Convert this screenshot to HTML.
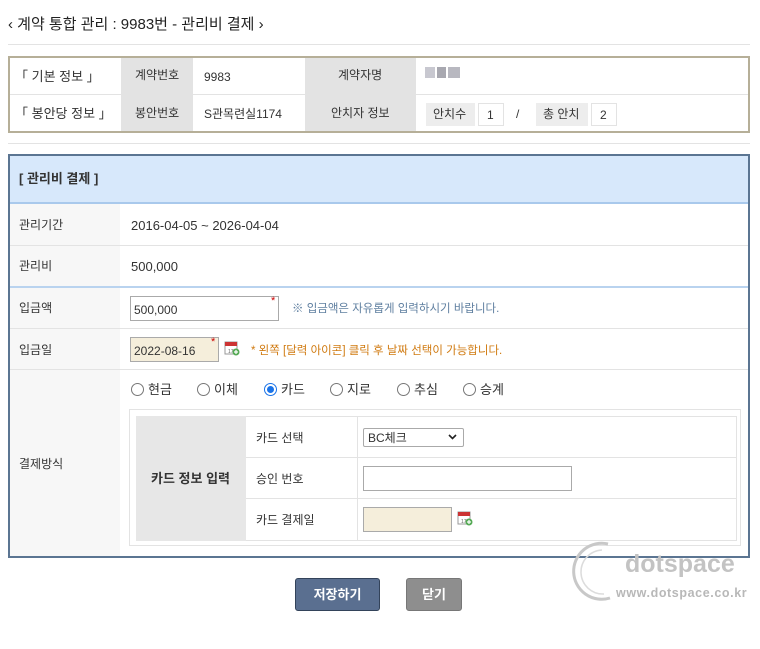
<!DOCTYPE html>
<html><head><meta charset="utf-8">
<style>
*{margin:0;padding:0;box-sizing:border-box}
body{width:760px;height:649px;background:#fff;font-family:"Liberation Sans","Noto Sans CJK KR","NanumGothic",sans-serif;font-size:12px;color:#333;position:relative;overflow:hidden}
.a{position:absolute}
.t{line-height:1;white-space:nowrap}
.cal{position:absolute;width:16px;height:16px}
.radio{position:absolute;top:383px;width:13px;height:13px;border:1px solid #777;border-radius:50%;background:#fff}
.rl{position:absolute;top:383px;font-size:13px;line-height:14px;color:#333}
</style></head><body>
<div class="a t" style="left:8px;top:17px;font-size:15px;color:#222">‹ 계약 통합 관리 : 9983번 - 관리비 결제 ›</div>
<div class="a" style="left:8px;top:44px;width:742px;height:1px;background:#e3e3e3"></div>

<div class="a" style="left:8px;top:56px;width:742px;height:77px;border:2px solid #b6af98;background:#fff"></div>
<div class="a" style="left:121px;top:58px;width:72px;height:73px;background:#e3e3e3"></div>
<div class="a" style="left:305px;top:58px;width:111px;height:73px;background:#e3e3e3"></div>
<div class="a" style="left:10px;top:94px;width:738px;height:1px;background:#e3e3e3"></div>
<div class="a t" style="left:15px;top:70px;font-size:13px">「 기본 정보 」</div>
<div class="a t" style="left:135px;top:69px">계약번호</div>
<div class="a t" style="left:204px;top:71px">9983</div>
<div class="a t" style="left:338px;top:69px">계약자명</div>
<div class="a" style="left:425px;top:67px;width:10px;height:11px;background:#c8c8d0"></div>
<div class="a" style="left:437px;top:67px;width:9px;height:11px;background:#a8a8b0"></div>
<div class="a" style="left:448px;top:67px;width:12px;height:11px;background:#b8b8c0"></div>
<div class="a t" style="left:15px;top:107px;font-size:13px">「 봉안당 정보 」</div>
<div class="a t" style="left:135px;top:107px">봉안번호</div>
<div class="a t" style="left:204px;top:108px">S관목련실1174</div>
<div class="a t" style="left:331px;top:107px">안치자 정보</div>
<div class="a" style="left:426px;top:103px;width:49px;height:23px;background:#ededed"></div>
<div class="a t" style="left:433px;top:108px">안치수</div>
<div class="a" style="left:478px;top:103px;width:26px;height:23px;border:1px solid #e3e3e3"></div>
<div class="a t" style="left:487px;top:109px">1</div>
<div class="a t" style="left:516px;top:108px">/</div>
<div class="a" style="left:536px;top:103px;width:52px;height:23px;background:#ededed"></div>
<div class="a t" style="left:543px;top:108px">총 안치</div>
<div class="a" style="left:591px;top:103px;width:26px;height:23px;border:1px solid #e3e3e3"></div>
<div class="a t" style="left:600px;top:109px">2</div>

<div class="a" style="left:8px;top:143px;width:742px;height:1px;background:#e3e3e3"></div>

<div class="a" style="left:8px;top:154px;width:742px;height:404px;border:2px solid #5b7592;background:#fff"></div>
<div class="a" style="left:10px;top:156px;width:738px;height:46px;background:#d7e8fb"></div>
<div class="a" style="left:10px;top:202px;width:738px;height:2px;background:#a9c9ec"></div>
<div class="a t" style="left:19px;top:172px;font-size:13px;font-weight:bold;color:#333">[ 관리비 결제 ]</div>
<div class="a" style="left:10px;top:204px;width:110px;height:352px;background:#f7f7f7"></div>
<div class="a" style="left:10px;top:245px;width:738px;height:1px;background:#e3e3e3"></div>
<div class="a" style="left:10px;top:286px;width:738px;height:2px;background:#b9d3ef"></div>
<div class="a" style="left:10px;top:328px;width:738px;height:1px;background:#e3e3e3"></div>
<div class="a" style="left:10px;top:369px;width:738px;height:1px;background:#e3e3e3"></div>

<div class="a t" style="left:19px;top:219px">관리기간</div>
<div class="a t" style="left:131px;top:219px;font-size:13px">2016-04-05 ~ 2026-04-04</div>
<div class="a t" style="left:19px;top:260px">관리비</div>
<div class="a t" style="left:131px;top:260px;font-size:13px">500,000</div>

<div class="a t" style="left:19px;top:302px">입금액</div>
<div class="a" style="left:130px;top:296px;width:149px;height:25px;border:1px solid #aaa;background:#fff"></div>
<div class="a t" style="left:134px;top:304px">500,000</div>
<div class="a t" style="left:271px;top:296px;color:#c00;font-size:11px">*</div>
<div class="a t" style="left:292px;top:304px;color:#5f7fa0;font-size:11.5px">※ 입금액은 자유롭게 입력하시기 바랍니다.</div>

<div class="a t" style="left:19px;top:344px">입금일</div>
<div class="a" style="left:130px;top:337px;width:89px;height:25px;border:1px solid #aaa;background:#f5eedb"></div>
<div class="a t" style="left:134px;top:345px">2022-08-16</div>
<div class="a t" style="left:211px;top:337px;color:#c00;font-size:11px">*</div>
<svg class="cal" style="left:224px;top:340px" viewBox="0 0 16 16"><rect x="1" y="2" width="12" height="12" fill="#fff" stroke="#999"/><rect x="1" y="2" width="12" height="4" fill="#c33"/><text x="4" y="13" font-size="5" fill="#666" font-family="Liberation Sans">17</text><circle cx="12" cy="12" r="3.5" fill="#5a5"/><path d="M10 12h4M12 10v4" stroke="#fff" stroke-width="1.2"/></svg>
<div class="a t" style="left:251px;top:346px;color:#d07a10;font-size:11.5px">* 왼쪽 [달력 아이콘] 클릭 후 날짜 선택이 가능합니다.</div>

<div class="radio" style="left:131px"></div><div class="rl" style="left:148px">현금</div>
<div class="radio" style="left:197px"></div><div class="rl" style="left:214px">이체</div>
<div class="radio" style="left:264px;border-color:#1a73e8"><div style="position:absolute;left:2px;top:2px;width:7px;height:7px;border-radius:50%;background:#1a73e8"></div></div><div class="rl" style="left:281px">카드</div>
<div class="radio" style="left:330px"></div><div class="rl" style="left:347px">지로</div>
<div class="radio" style="left:397px"></div><div class="rl" style="left:414px">추심</div>
<div class="radio" style="left:463px"></div><div class="rl" style="left:480px">승계</div>

<div class="a t" style="left:19px;top:458px">결제방식</div>

<div class="a" style="left:129px;top:409px;width:612px;height:137px;border:1px solid #e3e3e3"></div>
<div class="a" style="left:136px;top:416px;width:601px;height:125px;border:1px solid #e3e3e3"></div>
<div class="a" style="left:136px;top:416px;width:110px;height:125px;background:#e7e7e7"></div>
<div class="a" style="left:246px;top:457px;width:491px;height:1px;background:#e3e3e3"></div>
<div class="a" style="left:246px;top:498px;width:491px;height:1px;background:#e3e3e3"></div>
<div class="a" style="left:357px;top:416px;width:1px;height:125px;background:#e3e3e3"></div>
<div class="a t" style="left:151px;top:472px;font-size:13px;font-weight:bold;color:#333">카드 정보 입력</div>
<div class="a t" style="left:256px;top:432px">카드 선택</div>
<div class="a t" style="left:256px;top:473px">승인 번호</div>
<div class="a t" style="left:256px;top:514px">카드 결제일</div>
<div class="a" style="left:363px;top:428px;width:101px;height:19px;border:1px solid #aaa;border-radius:2px;background:#fff"></div>
<div class="a t" style="left:368px;top:432px">BC체크</div>
<svg class="a" style="left:448px;top:433px" width="9" height="8" viewBox="0 0 9 8"><path d="M1 2l3.5 3.5L8 2" stroke="#222" stroke-width="1.6" fill="none"/></svg>
<div class="a" style="left:363px;top:466px;width:209px;height:25px;border:1px solid #aaa;background:#fff"></div>
<div class="a" style="left:363px;top:507px;width:89px;height:25px;border:1px solid #aaa;background:#f5eedb"></div>
<svg class="cal" style="left:457px;top:510px" viewBox="0 0 16 16"><rect x="1" y="2" width="12" height="12" fill="#fff" stroke="#999"/><rect x="1" y="2" width="12" height="4" fill="#c33"/><text x="4" y="13" font-size="5" fill="#666" font-family="Liberation Sans">17</text><circle cx="12" cy="12" r="3.5" fill="#5a5"/><path d="M10 12h4M12 10v4" stroke="#fff" stroke-width="1.2"/></svg>

<svg class="a" style="left:560px;top:540px" width="70" height="62" viewBox="0 0 70 62"><path d="M48 4 A28 28 0 1 0 50 58" stroke="#c8c8c8" stroke-width="3" fill="none"/><path d="M42 10 A22 22 0 1 0 44 54" stroke="#dcdcdc" stroke-width="1.5" fill="none"/></svg>
<div class="a t" style="left:625px;top:552px;font-size:25px;font-weight:600;color:#c3c3c3">dotspace</div>
<div class="a t" style="left:616px;top:587px;font-size:12.5px;color:#b8b8b8;font-weight:bold;letter-spacing:0.6px">www.dotspace.co.kr</div>

<div class="a" style="left:295px;top:578px;width:85px;height:33px;background:#5a6f90;border:1px solid #33435a;border-radius:3px;color:#fff;font-weight:bold;font-size:13px;text-align:center;line-height:31px">저장하기</div>
<div class="a" style="left:406px;top:578px;width:56px;height:33px;background:#8e8e8e;border:1px solid #777;border-radius:3px;color:#fff;font-weight:bold;font-size:13px;text-align:center;line-height:31px">닫기</div>
</body></html>
